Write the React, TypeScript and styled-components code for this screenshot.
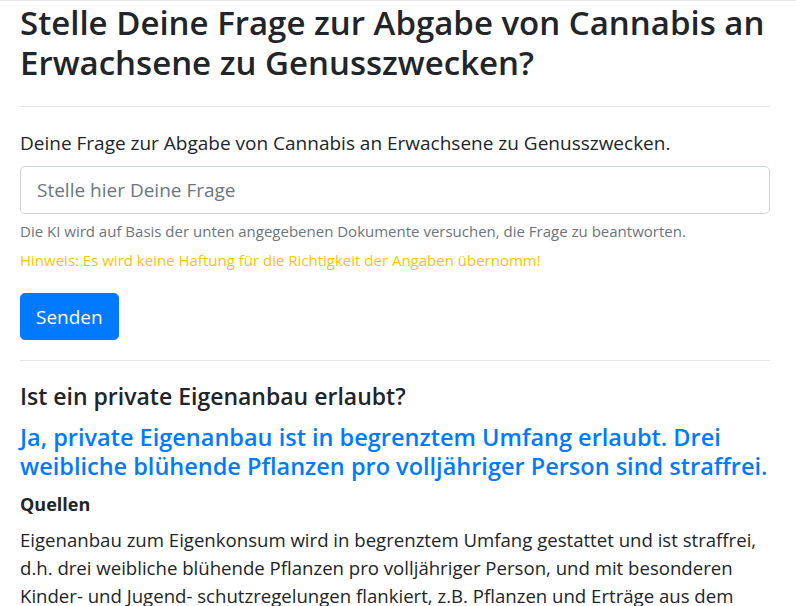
import React from 'react';
import styled, { createGlobalStyle } from 'styled-components';

const GlobalStyle = createGlobalStyle`
  html, body {
    margin: 0;
    padding: 0;
    background: #fff;
  }
  body {
    font-family: "Open Sans", "Noto Sans", sans-serif;
    color: #212529;
    border-top: 1px solid #e6e6e6;
  }
  * {
    box-sizing: border-box;
  }
`;

export default function App() {
  return (
    <>
      <GlobalStyle />
      <Page>
        <Title>Stelle Deine Frage zur Abgabe von Cannabis an Erwachsene zu Genusszwecken?</Title>
        <Divider />
        <Form onSubmit={(e) => e.preventDefault()}>
          <Label htmlFor="frage">Deine Frage zur Abgabe von Cannabis an Erwachsene zu Genusszwecken.</Label>
          <Input id="frage" type="text" placeholder="Stelle hier Deine Frage" />
          <Help>Die KI wird auf Basis der unten angegebenen Dokumente versuchen, die Frage zu beantworten.</Help>
          <Help warning>Hinweis: Es wird keine Haftung für die Richtigkeit der Angaben übernomm!</Help>
          <SendButton type="submit">Senden</SendButton>
        </Form>
        <Divider flush />
        <Question>Ist ein private Eigenanbau erlaubt?</Question>
        <Answer>Ja, private Eigenanbau ist in begrenztem Umfang erlaubt. Drei weibliche blühende Pflanzen pro volljähriger Person sind straffrei.</Answer>
        <SourcesTitle>Quellen</SourcesTitle>
        <Source>
          Eigenanbau zum Eigenkonsum wird in begrenztem Umfang gestattet und ist straffrei,
          d.h. drei weibliche blühende Pflanzen pro volljähriger Person, und mit besonderen
          Kinder- und Jugend- schutzregelungen flankiert, z.B. Pflanzen und Erträge aus dem
          Eigenanbau sind vor dem Zugriff durch Kinder und Jugendliche zu schützen.
        </Source>
      </Page>
    </>
  );
}

const Page = styled.main`
  padding: 0 26px 0 20px;
`;

const Title = styled.h1`
  margin: 0;
  padding-top: 2px;
  font-size: 33px;
  font-weight: 600;
  line-height: 40px;
`;

const Divider = styled.hr<{ flush?: boolean }>`
  margin: ${({ flush }) => (flush ? '0' : '23px 0 0')};
  border: 0;
  border-top: 1px solid #e5e5e5;
`;

const Form = styled.form`
  display: flex;
  flex-direction: column;
  align-items: flex-start;
  padding-top: 22px;
  padding-bottom: 20px;
`;

const Label = styled.label`
  font-size: 19px;
  line-height: 28px;
  margin-bottom: 9px;
`;

const Input = styled.input`
  width: 100%;
  height: 48px;
  padding: 8px 16px;
  font-family: inherit;
  font-size: 19px;
  color: #495057;
  border: 1px solid #ced4da;
  border-radius: 4.8px;
  outline: none;

  &::placeholder {
    color: #6c757d;
  }
`;

const Help = styled.small<{ warning?: boolean }>`
  display: block;
  font-size: 15px;
  line-height: 22px;
  margin-top: ${({ warning }) => (warning ? '7px' : '6px')};
  color: ${({ warning }) => (warning ? '#ffc107' : '#6c757d')};
`;

const SendButton = styled.button`
  margin-top: 22px;
  height: 47px;
  padding: 0 15px;
  font-family: inherit;
  font-size: 19px;
  color: #fff;
  background: #007bff;
  border: 1px solid #007bff;
  border-radius: 4.8px;
  cursor: pointer;
`;

const Question = styled.h4`
  margin: 21px 0 12px;
  font-size: 23px;
  font-weight: 600;
  line-height: 29px;
`;

const Answer = styled.h4`
  margin: 0 0 11px;
  font-size: 23.5px;
  font-weight: 600;
  line-height: 29px;
  color: #007bff;
`;

const SourcesTitle = styled.h6`
  margin: 0 0 10px;
  font-size: 18px;
  font-weight: 700;
  line-height: 24px;
`;

const Source = styled.p`
  margin: 0;
  font-size: 18.6px;
  line-height: 28px;
`;
